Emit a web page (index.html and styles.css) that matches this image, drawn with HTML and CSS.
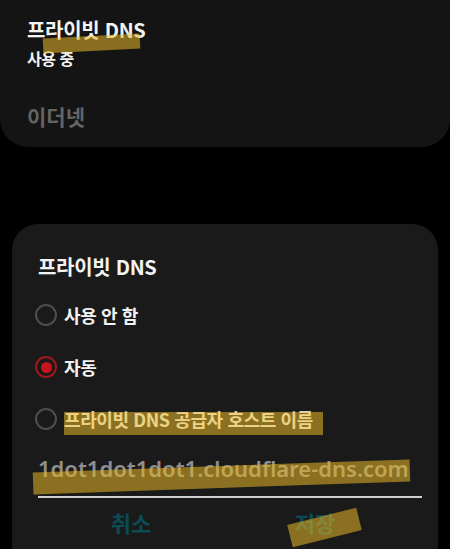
FILE: index.html
```html
<!DOCTYPE html>
<html lang="ko">
<head>
<meta charset="utf-8">
<title>프라이빗 DNS</title>
<link rel="stylesheet" href="styles.css">
</head>
<body>
  <section class="top-card">
    <div class="top-title">프라이빗 DNS</div>
    <div class="top-sub">사용 중</div>
    <div class="top-item">이더넷</div>
  </section>

  <section class="dialog">
    <div class="dialog-title">프라이빗 DNS</div>
    <div class="option">
      <span class="radio"></span>
      <span class="option-label">사용 안 함</span>
    </div>
    <div class="option">
      <span class="radio radio-on"></span>
      <span class="option-label">자동</span>
    </div>
    <div class="option">
      <span class="radio"></span>
      <span class="option-label">프라이빗 DNS 공급자 호스트 이름</span>
    </div>
    <div class="host-input">1dot1dot1dot1.cloudflare-dns.com</div>
    <div class="buttons">
      <span class="btn">취소</span>
      <span class="btn">저장</span>
    </div>
  </section>

  <div class="marker marker-title"></div>
  <div class="marker marker-option"></div>
  <div class="marker marker-input"></div>
  <div class="marker marker-save"></div>
</body>
</html>
```

FILE: styles.css
```css
html, body {
  margin: 0;
  padding: 0;
  width: 450px;
  height: 549px;
  overflow: hidden;
  background: #000;
}

body {
  position: relative;
  font-family: "Noto Sans CJK KR", "Noto Sans", sans-serif;
  font-weight: 700;
  color: #f2f2f2;
}

.top-card {
  box-sizing: border-box;
  height: 147px;
  padding: 16px 27px 0;
  background: #141414;
  border-radius: 0 0 28px 28px;
}

.top-title {
  font-size: 20px;
  line-height: 28px;
  letter-spacing: -0.3px;
}

.top-sub {
  margin-top: 4px;
  font-size: 16px;
  line-height: 21px;
  letter-spacing: -0.5px;
}

.top-item {
  margin-top: 33px;
  font-size: 21px;
  line-height: 28px;
  color: #646464;
}

.dialog {
  margin: 77px 12px 0;
  padding: 29px 16px 40px 23px;
  background: #1a1a1a;
  border-radius: 26px;
}

.dialog-title {
  padding-left: 3px;
  font-size: 20px;
  line-height: 28px;
  letter-spacing: -0.3px;
  margin-bottom: 8px;
}

.option {
  display: flex;
  align-items: center;
  gap: 7px;
  height: 52px;
}

.radio {
  box-sizing: border-box;
  width: 22px;
  height: 22px;
  border-radius: 50%;
  border: 2px solid #4e4e4e;
  display: flex;
  align-items: center;
  justify-content: center;
  flex: none;
}

.radio-on {
  border-color: #a3161b;
}

.radio-on::after {
  content: "";
  width: 11px;
  height: 11px;
  border-radius: 50%;
  background: #c8151d;
}

.option-label {
  font-size: 18px;
  line-height: 26px;
  letter-spacing: -0.4px;
}

.host-input {
  margin: 8px 0 0 3px;
  padding-bottom: 13px;
  border-bottom: 2px solid #cfcfcf;
  font-family: "Noto Sans", sans-serif;
  font-weight: 600;
  font-size: 22px;
  line-height: 30px;
  color: #8f8f8f;
  white-space: nowrap;
}

.buttons {
  display: flex;
  margin: 9px 0 0 4px;
  width: 368px;
}

.btn {
  flex: 1;
  text-align: center;
  font-size: 22px;
  line-height: 30px;
  color: #0b4b56;
}

.marker {
  position: absolute;
  background: rgba(232, 184, 38, 0.55);
}

.marker-title {
  left: 43px;
  top: 35.5px;
  width: 97px;
  height: 14.5px;
  transform: rotate(-3deg);
}

.marker-option {
  left: 64px;
  top: 412px;
  width: 259px;
  height: 23px;
}

.marker-input {
  left: 33px;
  top: 465.5px;
  width: 377px;
  height: 22px;
  transform: rotate(-2deg);
}

.marker-save {
  left: 289px;
  top: 515.75px;
  width: 71px;
  height: 23px;
  transform: rotate(-14deg);
}
```
